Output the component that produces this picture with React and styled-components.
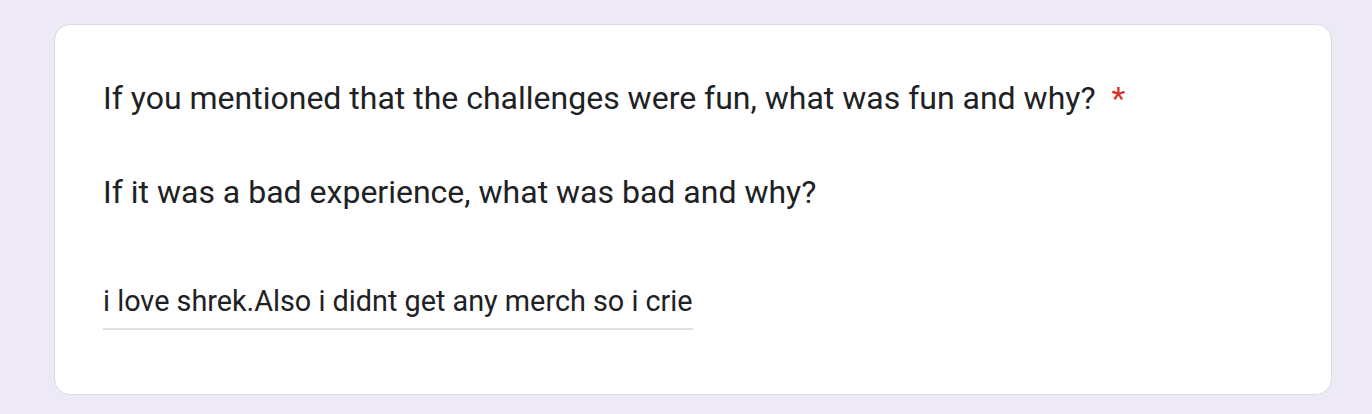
import React from 'react';
import styled, { createGlobalStyle } from 'styled-components';

const GlobalStyle = createGlobalStyle`
  html, body {
    margin: 0;
    padding: 0;
    background: #ede9f7;
    font-family: Roboto, "Liberation Sans", Arial, sans-serif;
  }
`;

const Page = styled.div`
  padding: 24px 40px 19px 54px;
  width: 1372px;
  box-sizing: border-box;
`;

const Card = styled.div`
  background: #fff;
  border: 1px solid #dadce0;
  border-radius: 16px;
  padding: 49px 48px 0 48px;
  box-sizing: border-box;
  height: 371px;
`;

const Question = styled.div`
  font-size: 32px;
  line-height: 48px;
  color: #202124;
`;

const Line = styled.p`
  margin: 0;
  & + & {
    margin-top: 46px;
  }
`;

const Required = styled.span`
  color: #d93025;
  margin-left: 16px;
`;

const AnswerInput = styled.input`
  display: block;
  width: 590px;
  height: 36px;
  margin-top: 67px;
  border: none;
  border-bottom: 2px solid #e0e0e0;
  padding: 0 0 9px 0;
  font-family: inherit;
  font-size: 28.8px;
  color: #202124;
  outline: none;
  background: transparent;
`;

export default function App() {
  return (
    <>
      <GlobalStyle />
      <Page>
        <Card>
          <Question>
            <Line>
              If you mentioned that the challenges were fun, what was fun and why?
              <Required>*</Required>
            </Line>
            <Line>If it was a bad experience, what was bad and why?</Line>
          </Question>
          <AnswerInput readOnly value="i love shrek.Also i didnt get any merch so i cried" />
        </Card>
      </Page>
    </>
  );
}
